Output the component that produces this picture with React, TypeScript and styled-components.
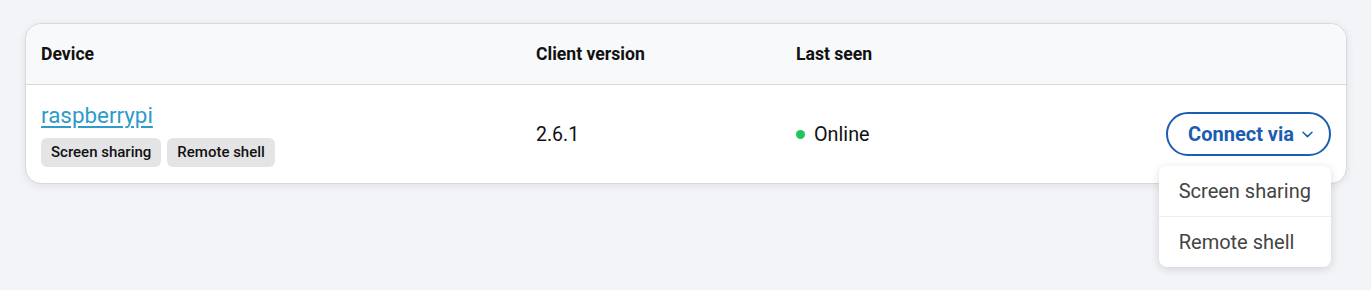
import React from 'react';
import styled, { createGlobalStyle } from 'styled-components';

const GlobalStyle = createGlobalStyle`
  html, body {
    margin: 0;
    min-height: 100%;
    background: #f3f4f8;
    font-family: Roboto, 'Liberation Sans', sans-serif;
    color: #111;
  }
`;

const Page = styled.div`
  box-sizing: border-box;
  min-height: 290px;
  padding: 23px 24px 0 25px;
`;

const Card = styled.div`
  position: relative;
  background: #fff;
  border: 1px solid #d6d8dc;
  border-radius: 16px;
  box-shadow: 0 2px 8px rgba(0, 0, 0, 0.08);
`;

const Row = styled.div<{ $head?: boolean }>`
  display: grid;
  grid-template-columns: 495px 260px 1fr auto;
  align-items: center;
  padding: ${(p) => (p.$head ? '0 15px' : '16px 15px')};
  height: ${(p) => (p.$head ? '60px' : 'auto')};
  background: ${(p) => (p.$head ? '#f8f9fa' : 'transparent')};
  border-bottom: ${(p) => (p.$head ? '1px solid #d9d9d9' : 'none')};
  border-radius: ${(p) => (p.$head ? '16px 16px 0 0' : '0')};
`;

const HeadCell = styled.div`
  font-size: 17.6px;
  font-weight: 700;
  color: #111;
`;

const Cell = styled.div`
  font-size: 19.5px;
  color: #111;
`;

const DeviceLink = styled.a`
  display: block;
  font-size: 22.4px;
  line-height: 29px;
  color: #2e9bc9;
  text-decoration: underline;
  text-underline-offset: 3px;
  margin-bottom: 8px;
`;

const Tags = styled.div`
  display: flex;
  gap: 6px;
`;

const Tag = styled.span`
  background: #e4e4e6;
  border-radius: 6px;
  padding: 5px 10px;
  font-size: 15px;
  line-height: 19px;
  font-weight: 500;
  color: #111;
`;

const Status = styled.div`
  display: flex;
  align-items: center;
  gap: 9px;
  font-size: 19.8px;
`;

const Dot = styled.span`
  width: 9px;
  height: 9px;
  border-radius: 50%;
  background: #1fc65b;
`;

const Actions = styled.div`
  position: relative;
  justify-self: end;
`;

const ConnectButton = styled.button`
  display: flex;
  align-items: center;
  gap: 8px;
  height: 44px;
  padding: 0 16px 0 20px;
  border: 2px solid #1b5db0;
  border-radius: 22px;
  background: #fff;
  color: #1b5db0;
  font-family: inherit;
  font-size: 20px;
  font-weight: 700;
  cursor: pointer;
`;

const Menu = styled.ul`
  position: absolute;
  right: 0;
  top: 54px;
  min-width: 172px;
  box-sizing: border-box;
  margin: 0;
  padding: 0;
  list-style: none;
  background: #fff;
  border-radius: 8px;
  box-shadow: 0 2px 10px rgba(0, 0, 0, 0.14);
  z-index: 2;
`;

const MenuItem = styled.li`
  padding: 0 20px;
  height: 50px;
  display: flex;
  align-items: center;
  white-space: nowrap;
  font-size: 20px;
  color: #444;
  & + & {
    border-top: 1px solid #eceef0;
  }
`;

const Chevron = () => (
  <svg width="11" height="7" viewBox="0 0 11 7" fill="none">
    <path d="M1 1.2 5.5 5.6 10 1.2" stroke="currentColor" strokeWidth="1.5" strokeLinecap="round" strokeLinejoin="round" />
  </svg>
);

export default function App() {
  return (
    <Page>
      <GlobalStyle />
      <Card>
        <Row $head>
          <HeadCell>Device</HeadCell>
          <HeadCell>Client version</HeadCell>
          <HeadCell>Last seen</HeadCell>
          <HeadCell />
        </Row>
        <Row>
          <div>
            <DeviceLink href="#">raspberrypi</DeviceLink>
            <Tags>
              <Tag>Screen sharing</Tag>
              <Tag>Remote shell</Tag>
            </Tags>
          </div>
          <Cell>2.6.1</Cell>
          <Status>
            <Dot />
            Online
          </Status>
          <Actions>
            <ConnectButton>
              Connect via
              <Chevron />
            </ConnectButton>
            <Menu>
              <MenuItem>Screen sharing</MenuItem>
              <MenuItem>Remote shell</MenuItem>
            </Menu>
          </Actions>
        </Row>
      </Card>
    </Page>
  );
}
